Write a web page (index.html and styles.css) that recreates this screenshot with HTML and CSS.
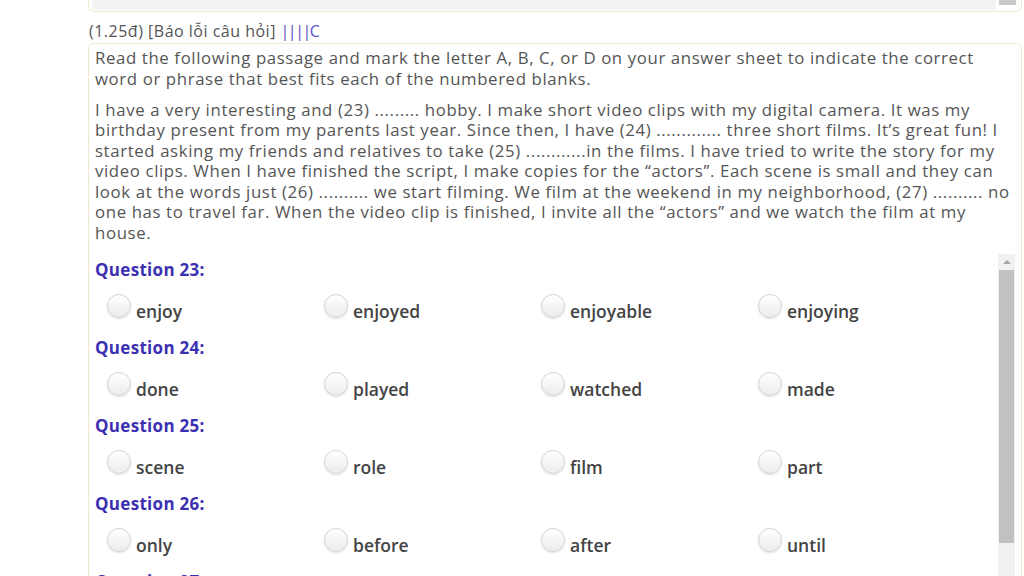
FILE: index.html
```html
<!DOCTYPE html>
<html>
<head>
<meta charset="utf-8">
<link rel="stylesheet" href="styles.css">
</head>
<body>
<div class="page">
  <div class="topbox">
    <div class="topfill"></div>
    <div class="topthumb"></div>
  </div>
  <div class="heading">(1.25đ) [Báo lỗi câu hỏi] <span class="code">||||C</span></div>
  <div class="card">
    <div class="passage">
      <p>Read the following passage and mark the letter A, B, C, or D on your answer sheet to indicate the correct<br>word or phrase that best fits each of the numbered blanks.</p>
      <p>I have a very interesting and (23) ......... hobby. I make short video clips with my digital camera. It was my<br>birthday present from my parents last year. Since then, I have (24) ............. three short films. It’s great fun! I<br>started asking my friends and relatives to take (25) ............in the films. I have tried to write the story for my<br>video clips. When I have finished the script, I make copies for the “actors”. Each scene is small and they can<br>look at the words just (26) .......... we start filming. We film at the weekend in my neighborhood, (27) .......... no<br>one has to travel far. When the video clip is finished, I invite all the “actors” and we watch the film at my<br>house.</p>
    </div>
    <div class="scrollarea">
      <div class="questions">
        <div class="q">
          <div class="qtitle">Question 23:</div>
          <div class="opts">
            <label class="opt"><span class="radio"></span>enjoy</label>
            <label class="opt"><span class="radio"></span>enjoyed</label>
            <label class="opt"><span class="radio"></span>enjoyable</label>
            <label class="opt"><span class="radio"></span>enjoying</label>
          </div>
        </div>
        <div class="q">
          <div class="qtitle">Question 24:</div>
          <div class="opts">
            <label class="opt"><span class="radio"></span>done</label>
            <label class="opt"><span class="radio"></span>played</label>
            <label class="opt"><span class="radio"></span>watched</label>
            <label class="opt"><span class="radio"></span>made</label>
          </div>
        </div>
        <div class="q">
          <div class="qtitle">Question 25:</div>
          <div class="opts">
            <label class="opt"><span class="radio"></span>scene</label>
            <label class="opt"><span class="radio"></span>role</label>
            <label class="opt"><span class="radio"></span>film</label>
            <label class="opt"><span class="radio"></span>part</label>
          </div>
        </div>
        <div class="q">
          <div class="qtitle">Question 26:</div>
          <div class="opts">
            <label class="opt"><span class="radio"></span>only</label>
            <label class="opt"><span class="radio"></span>before</label>
            <label class="opt"><span class="radio"></span>after</label>
            <label class="opt"><span class="radio"></span>until</label>
          </div>
        </div>
        <div class="q last">
          <div class="qtitle">Question 27:</div>
        </div>
      </div>
      <div class="scrollbar">
        <div class="arrow"></div>
        <div class="thumb"></div>
      </div>
    </div>
  </div>
</div>
</body>
</html>
```
FILE: styles.css
```css
html, body {
  margin: 0;
  padding: 0;
  background: #fff;
  overflow: hidden;
  height: 576px;
}
.page {
  margin-left: 88px;
  width: 934px;
  font-family: "Open Sans", "Lato", sans-serif;
  color: #555;
  height: 576px;
  overflow: hidden;
}
.topbox {
  height: 10px;
  border: 1px solid #efe8d3;
  border-top: none;
  border-radius: 0 0 6px 6px;
  display: flex;
  padding: 0 5px 1px 3px;
}
.topfill {
  flex: 1;
  background: #f3f3f2;
}
.topthumb {
  width: 17px;
  margin-left: 3px;
  background: #f1f1f1;
  border-top: 5px solid #c8c8c8;
  height: 0;
}
.heading {
  margin-top: 9px;
  padding-left: 1px;
  font-size: 16px;
  line-height: 21px;
  height: 22px;
  color: #555;
  letter-spacing: 0.5px;
}
.code {
  color: #5a4fc3;
  letter-spacing: -1.5px;
}
.card {
  border: 1px solid #f1ead3;
  border-radius: 5px;
  padding: 4px 0 0 6px;
  height: 600px;
}
.passage p {
  margin: 0 0 10.5px 0;
  font-size: 16.8px;
  line-height: 20.5px;
  letter-spacing: 0.62px;
  white-space: nowrap;
}
.scrollarea {
  display: flex;
  margin-top: 10px;
}
.questions {
  flex: 1;
}
.q {
  height: 78px;
}
.qtitle {
  font-weight: bold;
  color: #3c30b2;
  font-size: 17px;
  letter-spacing: 0.3px;
  line-height: 22px;
  padding-top: 5px;
}
.opts {
  display: grid;
  grid-template-columns: 217px 217px 217px 217px;
  padding-left: 12px;
  margin-top: 18px;
}
.opt {
  display: flex;
  align-items: flex-start;
  font-weight: 600;
  color: #444;
  font-size: 17.5px;
  line-height: 24px;
}
.radio {
  width: 24px;
  height: 24px;
  border-radius: 50%;
  border: 1px solid #d4d4d4;
  background: linear-gradient(#ffffff, #ececec);
  box-shadow: 0 1px 2px rgba(0,0,0,0.12);
  margin-top: -5px;
  margin-right: 5px;
  box-sizing: border-box;
}
.scrollbar {
  width: 17px;
  margin-right: 6px;
  background: #f1f1f1;
  height: 330px;
}
.arrow {
  height: 16px;
  position: relative;
}
.arrow::after {
  content: "";
  position: absolute;
  left: 5px;
  top: 6px;
  border-left: 4px solid transparent;
  border-right: 4px solid transparent;
  border-bottom: 4px solid #a3a3a3;
}
.thumb {
  height: 273px;
  background: #c1c1c1;
  margin: 0 1px;
}
```
